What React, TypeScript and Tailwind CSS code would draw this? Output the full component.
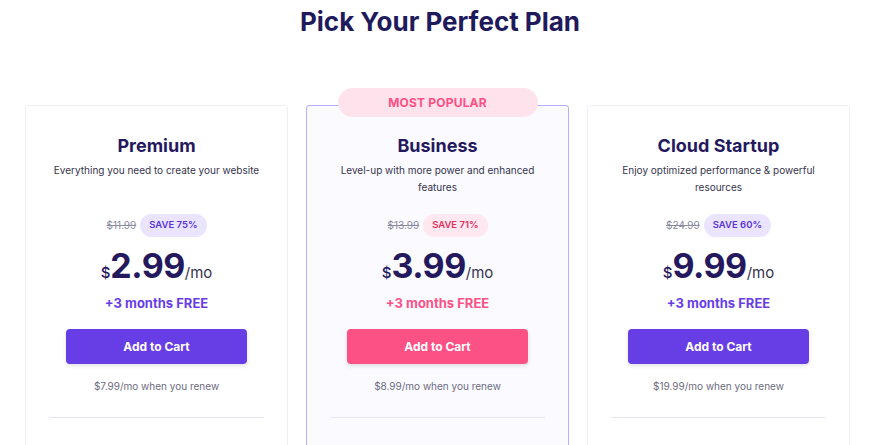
import React from "react";

type Plan = {
  name: string;
  desc: string;
  oldPrice: string;
  save: string;
  price: string;
  renew: string;
  popular?: boolean;
};

const plans: Plan[] = [
  {
    name: "Premium",
    desc: "Everything you need to create your website",
    oldPrice: "$11.99",
    save: "SAVE 75%",
    price: "2.99",
    renew: "$7.99/mo when you renew",
  },
  {
    name: "Business",
    desc: "Level-up with more power and enhanced features",
    oldPrice: "$13.99",
    save: "SAVE 71%",
    price: "3.99",
    renew: "$8.99/mo when you renew",
    popular: true,
  },
  {
    name: "Cloud Startup",
    desc: "Enjoy optimized performance & powerful resources",
    oldPrice: "$24.99",
    save: "SAVE 60%",
    price: "9.99",
    renew: "$19.99/mo when you renew",
  },
];

const PlanCard = ({ plan }: { plan: Plan }) => {
  const hot = plan.popular;
  return (
    <div
      className={`relative w-[263px] h-[400px] rounded-[3px] border flex flex-col items-center pt-[28px] ${
        hot ? "border-[#b4aefc] bg-[#fafaff]" : "border-[#efeffa] bg-white"
      }`}
    >
      {hot && (
        <div className="absolute left-1/2 -translate-x-1/2 -top-[18px] w-[200px] h-[29px] rounded-full bg-[#ffe3ec] flex items-center justify-center text-[12px] font-bold text-[#fc5185] tracking-[0.2px]">
          MOST POPULAR
        </div>
      )}
      <h3 className="text-[18px] leading-[24px] font-bold text-[#25195e]">{plan.name}</h3>
      <p className="mt-[4px] h-[34px] px-[16px] text-center text-[10px] leading-[17px] text-[#36344d]">
        {plan.desc}
      </p>
      <div className="mt-[18px] flex items-center gap-[4px]">
        <span className="text-[10px] text-[#8a8a9e] line-through">{plan.oldPrice}</span>
        <span
          className={`h-[23px] px-[9px] rounded-full flex items-center text-[9.5px] font-semibold ${
            hot ? "bg-[#ffe8ef] text-[#e0305f]" : "bg-[#ebe4ff] text-[#5a35d6]"
          }`}
        >
          {plan.save}
        </span>
      </div>
      <div className="mt-[10px] h-[38px] flex items-baseline text-[#25195e]">
        <span className="text-[15px] leading-[38px] font-medium">$</span>
        <span className="text-[34px] leading-[38px] font-bold tracking-[-0.5px]">{plan.price}</span>
        <span className="text-[15px] leading-[38px] text-[#36344d]">/mo</span>
      </div>
      <div
        className={`mt-[10px] text-[13px] leading-[16px] font-bold ${
          hot ? "text-[#fc5185]" : "text-[#673de6]"
        }`}
      >
        +3 months FREE
      </div>
      <button
        className={`mt-[18px] w-[181px] h-[35px] rounded-[4px] text-white text-[12px] font-bold shadow-[0_2px_4px_rgba(0,0,0,0.12)] ${
          hot ? "bg-[#fc5185]" : "bg-[#673de6]"
        }`}
      >
        Add to Cart
      </button>
      <div className="mt-[15px] text-[10px] leading-[14px] text-[#6d6b80]">{plan.renew}</div>
      <div className="mt-[24px] self-stretch mx-[23px] h-px bg-[#e6e6f8]" />
    </div>
  );
};

export default function App() {
  return (
    <div className="w-[880px] h-[445px] overflow-hidden bg-white font-['Inter',sans-serif]">
      <h1 className="pt-[6px] text-center text-[26px] leading-[32px] font-bold text-[#1f1a5c]">
        Pick Your Perfect Plan
      </h1>
      <div className="mt-[67px] flex justify-center gap-[18px] pr-[5px]">
        {plans.map((p) => (
          <PlanCard key={p.name} plan={p} />
        ))}
      </div>
    </div>
  );
}
